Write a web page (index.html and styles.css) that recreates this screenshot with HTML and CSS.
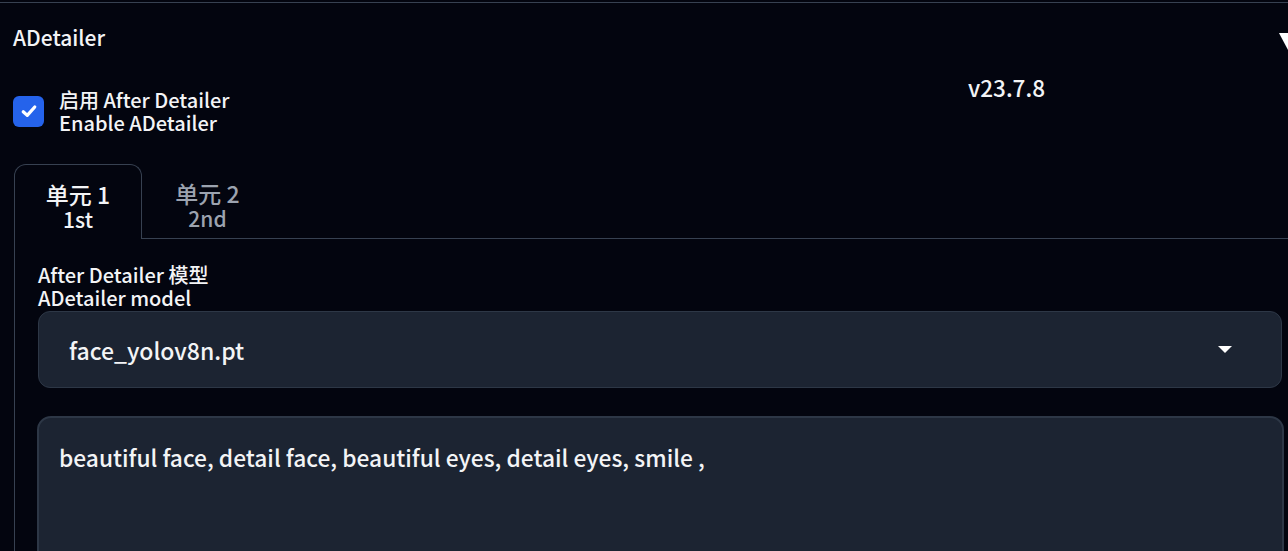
FILE: index.html
```html
<!DOCTYPE html>
<html lang="zh">
<head>
<meta charset="utf-8">
<link rel="stylesheet" href="styles.css">
</head>
<body>
<div class="accordion">
  <div class="acc-head">
    <span class="acc-title">ADetailer</span>
    <span class="acc-arrow"></span>
  </div>
  <div class="enable-row">
    <label class="check">
      <span class="box">
        <svg viewBox="0 0 16 16" width="20" height="20"><path d="M3.4 8.6 L6.6 11.5 L12.6 4.8" fill="none" stroke="#fff" stroke-width="2.6" stroke-linecap="round" stroke-linejoin="round"/></svg>
      </span>
      <span class="check-text">启用 After Detailer<br>Enable ADetailer</span>
    </label>
    <div class="version">v23.7.8</div>
  </div>
  <div class="tabs">
    <div class="tab-nav">
      <div class="tab active"><span class="cn">单元 1</span><br>1st</div>
      <div class="tab"><span class="cn">单元 2</span><br>2nd</div>
      <div class="tab-fill"></div>
    </div>
    <div class="panel">
      <div class="field-label">After Detailer 模型<br>ADetailer model</div>
      <div class="dropdown">
        <span>face_yolov8n.pt</span>
        <span class="dd-arrow"></span>
      </div>
      <div class="textarea">beautiful face, detail face, beautiful eyes, detail eyes, smile ,</div>
    </div>
  </div>
</div>
</body>
</html>
```

FILE: styles.css
```css
html, body {
  margin: 0;
  padding: 0;
  background: #03050f;
  overflow: hidden;
}
body {
  font-family: "Noto Sans CJK SC", "Noto Sans", sans-serif;
  font-weight: 500;
  color: #f3f4f6;
  width: 1288px;
  height: 551px;
}
.accordion {
  margin-top: 2px;
  border-top: 1px solid #374151;
}
.acc-head {
  display: flex;
  justify-content: space-between;
  align-items: flex-start;
  padding: 20px 0 0 13px;
  height: 40px;
}
.acc-title {
  font-size: 21px;
  line-height: 28px;
}
.acc-arrow {
  width: 0;
  height: 0;
  margin-top: 10px;
  margin-right: -9px;
  border-left: 9px solid transparent;
  border-right: 9px solid transparent;
  border-top: 17px solid #ffffff;
}
.enable-row {
  display: flex;
  align-items: flex-start;
  padding: 25px 0 0 13px;
  height: 75px;
}
.check {
  display: flex;
  align-items: center;
  gap: 15px;
  width: 955px;
}
.box {
  width: 31px;
  height: 31px;
  border-radius: 6px;
  background: #2563eb;
  display: flex;
  align-items: center;
  justify-content: center;
}
.check-text {
  font-size: 20px;
  line-height: 23px;
}
.version {
  font-size: 22.5px;
  line-height: 24px;
  margin-top: -13px;
}
.tabs {
  padding-left: 14px;
  margin-top: 1px;
}
.tab-nav {
  display: flex;
  height: 75px;
}
.tab {
  box-sizing: border-box;
  width: 128px;
  height: 75px;
  padding-top: 17px;
  text-align: center;
  font-size: 21px;
  line-height: 24px;
  color: #9ca3af;
  border-bottom: 1px solid #374151;
}
.cn {
  font-size: 23px;
  line-height: 24px;
}
.tab.active {
  color: #f3f4f6;
  border: 1px solid #374151;
  border-bottom: none;
  border-radius: 12px 12px 0 0;
}
.tab + .tab {
  width: 131px;
}
.tab-fill {
  flex: 1;
  border-bottom: 1px solid #374151;
}
.panel {
  border-left: 1px solid #374151;
  padding: 24px 0 0 23px;
  height: 320px;
}
.field-label {
  font-size: 20px;
  line-height: 23px;
  margin-bottom: 2px;
}
.dropdown {
  box-sizing: border-box;
  width: 1244px;
  height: 77px;
  background: #1c2432;
  border: 1px solid #2d3746;
  border-radius: 12px;
  display: flex;
  align-items: center;
  justify-content: space-between;
  padding: 0 49px 0 30px;
  font-size: 23px;
}
.dd-arrow {
  width: 0;
  height: 0;
  border-left: 7.5px solid transparent;
  border-right: 7.5px solid transparent;
  border-top: 7px solid #ffffff;
}
.textarea {
  box-sizing: border-box;
  width: 1247px;
  height: 200px;
  margin-top: 28px;
  margin-left: -1px;
  background: #1c2432;
  border: 2px solid #2d3746;
  border-radius: 14px;
  padding: 25px 20px;
  font-size: 22.75px;
  line-height: 30px;
}
```
